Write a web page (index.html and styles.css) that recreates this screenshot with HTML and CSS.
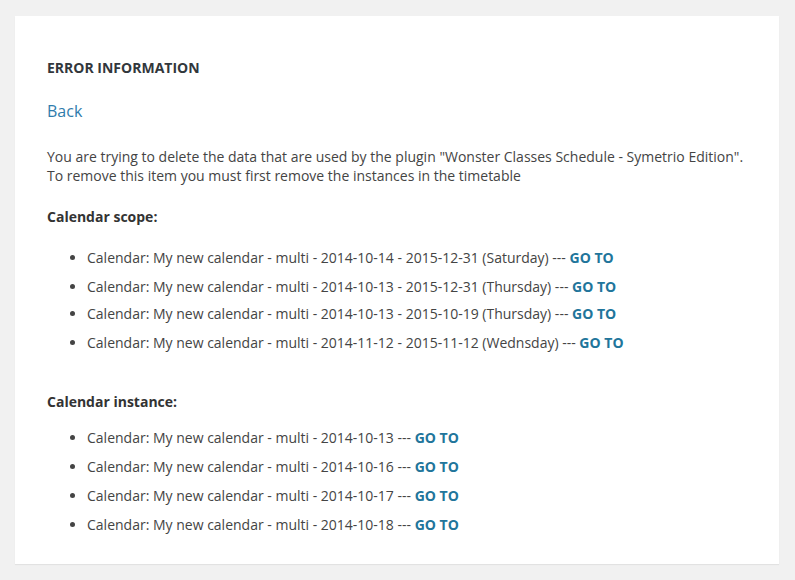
FILE: index.html
```html
<!DOCTYPE html>
<html>
<head>
<meta charset="utf-8">
<link rel="stylesheet" href="styles.css">
</head>
<body>
<div class="card">
  <h3 class="title">ERROR INFORMATION</h3>
  <a class="back" href="#">Back</a>
  <p class="msg">You are trying to delete the data that are used by the plugin "Wonster Classes Schedule - Symetrio Edition".<br>To remove this item you must first remove the instances in the timetable</p>
  <h4 class="sub">Calendar scope:</h4>
  <ul class="list">
    <li>Calendar: My new calendar - multi - 2014-10-14 - 2015-12-31 (Saturday) --- <a href="#">GO TO</a></li>
    <li class="tight">Calendar: My new calendar - multi - 2014-10-13 - 2015-12-31 (Thursday) --- <a href="#">GO TO</a></li>
    <li>Calendar: My new calendar - multi - 2014-10-13 - 2015-10-19 (Thursday) --- <a href="#">GO TO</a></li>
    <li>Calendar: My new calendar - multi - 2014-11-12 - 2015-11-12 (Wednsday) --- <a href="#">GO TO</a></li>
  </ul>
  <h4 class="sub sub-gap">Calendar instance:</h4>
  <ul class="list list-inst">
    <li>Calendar: My new calendar - multi - 2014-10-13 --- <a href="#">GO TO</a></li>
    <li>Calendar: My new calendar - multi - 2014-10-16 --- <a href="#">GO TO</a></li>
    <li>Calendar: My new calendar - multi - 2014-10-17 --- <a href="#">GO TO</a></li>
    <li>Calendar: My new calendar - multi - 2014-10-18 --- <a href="#">GO TO</a></li>
  </ul>
</div>
</body>
</html>
```
FILE: styles.css
```css
html, body {
  margin: 0;
  padding: 0;
  background: #f1f1f1;
}
body {
  font-family: "Open Sans", "Liberation Sans", sans-serif;
  font-size: 14px;
  color: #444;
  padding: 16px 16px 16px 15px;
}
.card {
  background: #fff;
  box-shadow: 0 1px 1px rgba(0,0,0,0.06);
  padding: 42px 32px 29px 32px;
}
.title {
  margin: 0;
  font-size: 14px;
  font-weight: 700;
  line-height: 20px;
  color: #32373c;
}
.back {
  display: block;
  margin-top: 21px;
  font-size: 16px;
  line-height: 24px;
  color: #2f7cac;
  text-decoration: none;
}
.msg {
  margin: 24px 0 0 0;
  line-height: 19px;
}
.sub {
  margin: 22px 0 0 0;
  font-size: 14px;
  font-weight: 700;
  line-height: 20px;
  color: #333;
}
.sub-gap {
  margin-top: 39px;
}
.list {
  margin: 21px 0 0 0;
  padding-left: 40px;
}
.list-inst {
  margin-top: 16px;
}
.list li {
  line-height: 20px;
  margin-bottom: 9px;
}
.list li.tight {
  margin-bottom: 7px;
}
.list li:last-child {
  margin-bottom: 0;
}
.list a {
  color: #21759b;
  font-weight: 700;
  text-decoration: none;
}
```
